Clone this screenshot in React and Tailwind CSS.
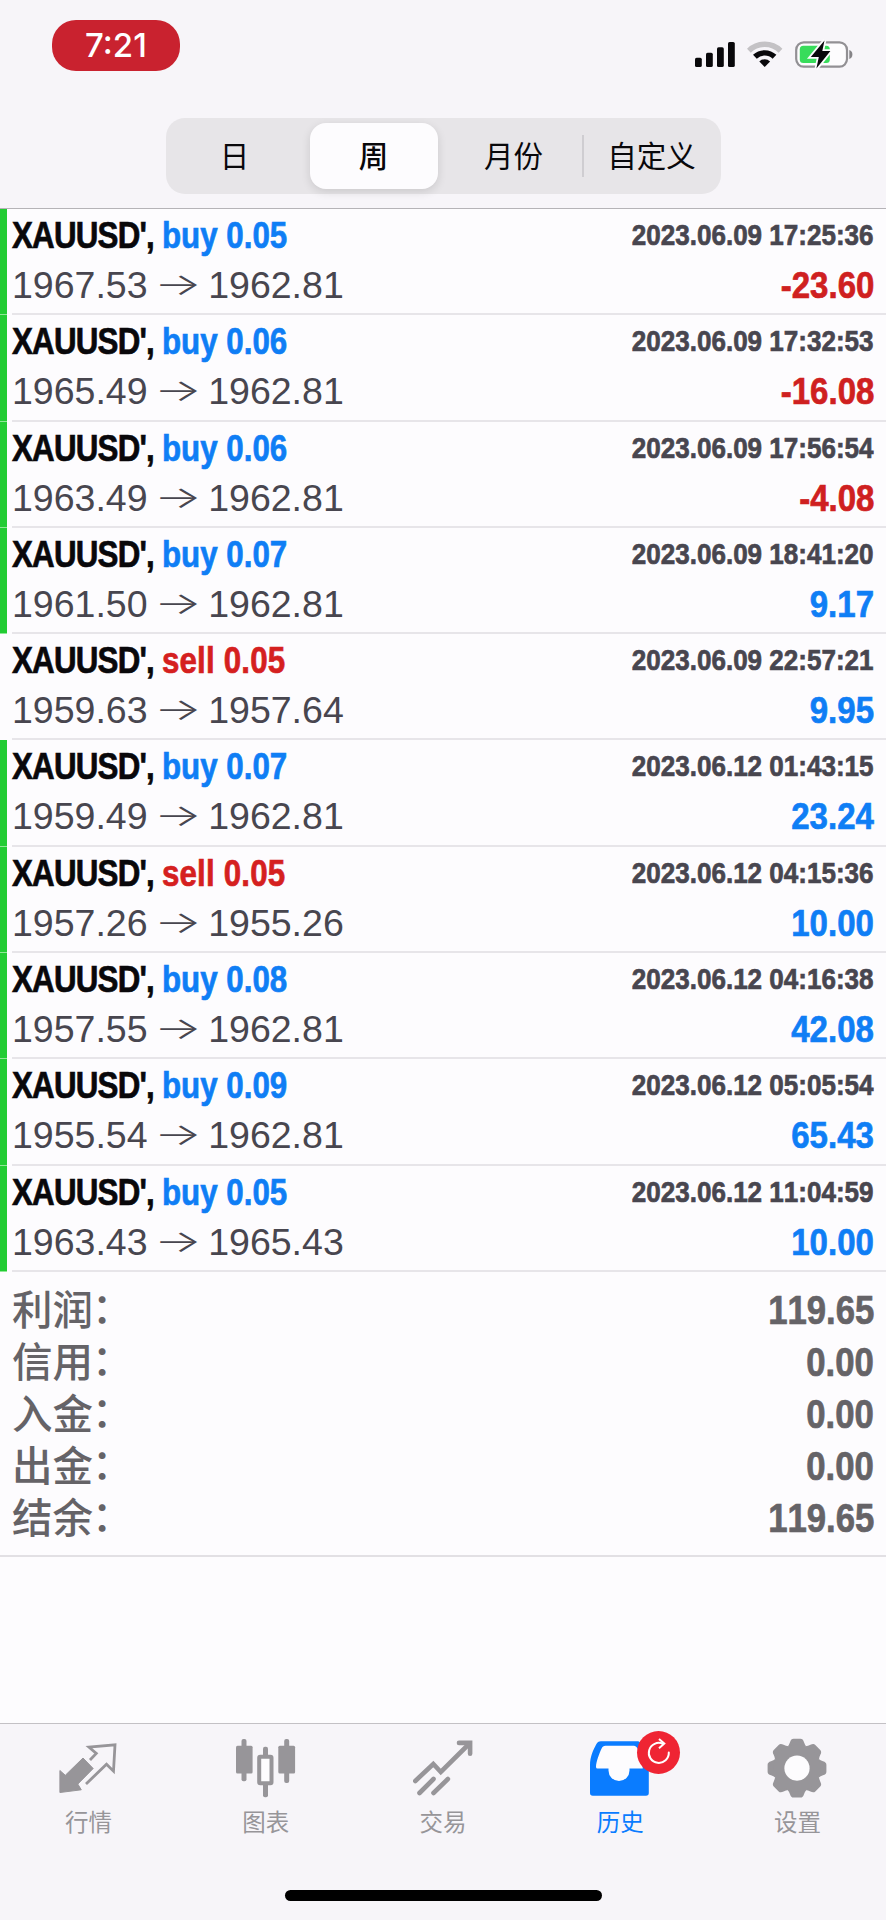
import React from 'react';
import { clsx } from 'clsx';

const periods = ['日', '周', '月份', '自定义'];

const deals = [
  { side: 'buy', lots: '0.05', open: '1967.53', close: '1962.81', time: '2023.06.09 17:25:36', profit: '-23.60', marked: true },
  { side: 'buy', lots: '0.06', open: '1965.49', close: '1962.81', time: '2023.06.09 17:32:53', profit: '-16.08', marked: true },
  { side: 'buy', lots: '0.06', open: '1963.49', close: '1962.81', time: '2023.06.09 17:56:54', profit: '-4.08', marked: true },
  { side: 'buy', lots: '0.07', open: '1961.50', close: '1962.81', time: '2023.06.09 18:41:20', profit: '9.17', marked: true },
  { side: 'sell', lots: '0.05', open: '1959.63', close: '1957.64', time: '2023.06.09 22:57:21', profit: '9.95', marked: false },
  { side: 'buy', lots: '0.07', open: '1959.49', close: '1962.81', time: '2023.06.12 01:43:15', profit: '23.24', marked: true },
  { side: 'sell', lots: '0.05', open: '1957.26', close: '1955.26', time: '2023.06.12 04:15:36', profit: '10.00', marked: true },
  { side: 'buy', lots: '0.08', open: '1957.55', close: '1962.81', time: '2023.06.12 04:16:38', profit: '42.08', marked: true },
  { side: 'buy', lots: '0.09', open: '1955.54', close: '1962.81', time: '2023.06.12 05:05:54', profit: '65.43', marked: true },
  { side: 'buy', lots: '0.05', open: '1963.43', close: '1965.43', time: '2023.06.12 11:04:59', profit: '10.00', marked: true },
];

const totals = [
  { label: '利润', value: '119.65' },
  { label: '信用', value: '0.00' },
  { label: '入金', value: '0.00' },
  { label: '出金', value: '0.00' },
  { label: '结余', value: '119.65' },
];

const StatusBar = () => (
  <div className="flex h-[118px] items-start justify-between pl-[52px] pr-[33px]">
    <div className="mt-5 flex h-[51px] w-32 items-center justify-center rounded-[24px] bg-[#c9222f] font-['Inter',sans-serif] text-[33px] font-medium leading-none text-white">
      7:21
    </div>
    <div className="mt-[39px] flex items-start">
      <svg width="40" height="31" viewBox="0 0 40 31" fill="#09080b">
        <rect x="0" y="18.7" width="6.8" height="9.3" rx="1.6" />
        <rect x="11" y="13.7" width="6.8" height="14.3" rx="1.6" />
        <rect x="22" y="8.3" width="6.8" height="19.7" rx="1.6" />
        <rect x="33" y="3" width="6.8" height="25" rx="1.6" />
      </svg>
      <svg className="ml-3" width="36" height="31" viewBox="0 -2 36 31" fill="none" strokeWidth="5.4">
        <path d="M1.9 9.7a22.7 22.7 0 0 1 31.6 0" stroke="#c4c2c5" />
        <path d="M7.9 15.8a14.1 14.1 0 0 1 19.6 0" stroke="#09080b" />
        <path d="M17.7 26l-5.4-5.6a8 8 0 0 1 10.8 0z" fill="#09080b" />
      </svg>
      <svg className="ml-[11px]" width="59" height="31" viewBox="0 0 59 31">
        <rect x="2.2" y="3.4" width="50.8" height="24.2" rx="7.5" fill="#fdfcfe" stroke="#929094" strokeWidth="2.2" />
        <rect x="5.8" y="6.7" width="30" height="17.3" rx="3.5" fill="#38dc5b" />
        <path d="M55.3 11c2.2.6 3.1 2.4 3.1 4.5s-.9 3.9-3.1 4.5z" fill="#858387" />
        <path d="M30.500 1.5L16.8 17.900h8L22.4 29.5 36.4 12.100h-8.1z" fill="#09080b" stroke="#fdfcfe" strokeWidth="3.6" paintOrder="stroke" />
      </svg>
    </div>
  </div>
);

const PeriodPicker = () => (
  <div className="mx-auto flex h-[76px] w-[555px] items-center rounded-[19px] bg-[#e7e5e8] font-['Noto_Sans_CJK_SC',sans-serif] text-[29.5px] text-[#09080b]">
    {periods.map((p) => (
      <button
        key={p}
        className={clsx(
          'flex shrink-0 items-center justify-center pb-0.5 leading-none',
          p === '周'
            ? 'mx-[6px] h-[66px] w-[128px] rounded-2xl bg-[#fdfcfe] font-medium shadow-[0_3px_10px_rgba(0,0,0,0.12)]'
            : 'h-[42px] w-[138px]',
          p === '月份' && 'pl-[2px]',
          p === '自定义' && 'border-l-2 border-[#cfcdd1]'
        )}
      >
        {p}
      </button>
    ))}
  </div>
);

// bold Helvetica squeezed horizontally, used for everything but the prices
const condensed = "font-['Liberation_Sans',sans-serif] font-bold [font-kerning:none] whitespace-pre [-webkit-text-stroke:0.7px_currentColor]";

const DealRow = ({ deal }) => (
  <li className="flex h-[106.3px]">
    <div className={clsx('mr-[5px] w-[7px] border-b', deal.marked ? 'border-[#8fe896] bg-[#22cc33]' : 'border-transparent')} />
    <div className="flex flex-1 justify-between border-b-2 border-[#e7e5e9] pr-3 pt-[2px]">
      <div>
        <div className={clsx(condensed, 'h-[49px] w-[340px] origin-left scale-x-[0.835] text-[37.5px] leading-[48px] tracking-[-0.95px] text-[#09080b]')}>
          XAUUSD', <span className={clsx(deal.side === 'buy' ? 'tracking-normal text-[#0f7ef5]' : 'tracking-[0.2px] text-[#d5201f]')}>{deal.side} {deal.lots}</span>
        </div>
        <div className="whitespace-pre font-['Liberation_Sans',sans-serif] text-[37.5px] leading-[51px] text-[#48464f] [font-kerning:none]">
          {deal.open} <span className="mx-[2px] inline-block scale-x-[1.34] scale-y-80 font-['Inter',sans-serif] font-light leading-none">→</span> {deal.close}
        </div>
      </div>
      <div className="flex flex-col items-end">
        <div className={clsx(condensed, 'h-[49px] origin-right scale-x-[0.868] text-[30px] leading-[47px] text-[#48464f]')}>{deal.time}</div>
        <div className={clsx(condensed, 'origin-right scale-x-[0.88] text-[37.5px] leading-[51px]', deal.profit.startsWith('-') ? 'text-[#cf2020]' : 'text-[#0f7ef5]')}>
          {deal.profit}
        </div>
      </div>
    </div>
  </li>
);

const Totals = () => (
  <div className="h-[285px] border-b-2 border-[#e2e0e4] px-3 pt-[12px] text-[#656367]">
    {totals.map((t) => (
      <div key={t.label} className="flex h-[52px] items-start justify-between">
        <span className="pt-[1px] font-['Liberation_Sans','Noto_Sans_CJK_SC',sans-serif] text-[40.5px] font-medium leading-[52px]">
          {t.label}<span className="relative -left-px -top-[2px]">：</span>
        </span>
        <span className={clsx(condensed, 'origin-right scale-x-[0.868] text-[40px] leading-[52px]')}>{t.value}</span>
      </div>
    ))}
  </div>
);

const QuotesIcon = () => (
  <svg width="60" height="60" viewBox="0 0 60 60">
    <path d="M31 22l6.300-6.600-7.300-6.200 26-2.300-1.500 26.300-7-6.900L27 46" fill="none" stroke="currentColor" strokeWidth="2.8" />
    <path d="M24 20l10.200 10.500-15.400 15.600 3.500 5.700L.9 54.500.9 32.500l5.400 4.800z" fill="currentColor" stroke="currentColor" strokeLinejoin="round" />
  </svg>
);

const ChartsIcon = () => (
  <svg width="60" height="60" viewBox="0 0 60 60" fill="currentColor">
    <rect x="5.500" y="1" width="5" height="42.300" rx="2" />
    <rect x="0" y="7.700" width="16.600" height="27.700" rx="1.500" />
    <rect x="27" y="8.700" width="5" height="50.600" rx="2" />
    <rect x="23.200" y="18.700" width="12.300" height="26.600" rx="1" fill="#fdfcfe" stroke="currentColor" strokeWidth="4" />
    <rect x="48.200" y="1" width="5" height="44" rx="2" />
    <rect x="42.300" y="7.700" width="16.800" height="27.700" rx="1.500" />
  </svg>
);

const TradeIcon = () => (
  <svg width="60" height="60" viewBox="0 0 60 60" fill="none" stroke="currentColor" strokeWidth="4.600" strokeLinecap="round">
    <path d="M2.300 43l18-17 7.500 8L56 6" />
    <path d="M46 4.900h11.100v10.900" />
    <path d="M6.500 55L20.500 41M20.500 55L34.900 41" />
  </svg>
);

const HistoryIcon = () => (
  <svg width="60" height="60" viewBox="0 0 60 60">
    <path d="M0 27C0 19 3.500 11.500 6 6.800 7.200 4.400 8.600 3.300 11 3.300H48C52 3.300 58.800 19 58.800 27V55Q58.800 57.700 56 57.700H2.800Q0 57.700 0 55z" fill="currentColor" />
    <path d="M6 29C6 24 9.500 15 11.600 10.600 12.500 8.500 13.500 7.700 15.500 7.700H44C49 7.700 52.800 23 52.800 30.500H39.500V32.500a10.500 10.500 0 0 1-21 0V30.500H7.500Q6 30.500 6 29z" fill="#fdfcfe" />
  </svg>
);

const SettingsIcon = () => (
  <svg width="60" height="60" viewBox="-30 -30.200 60 60" fill="currentColor">
    {[0, 45, 90, 135, 180, 225, 270, 315].map((a) => (
      <path key={a} transform={`rotate(${a})`} d="M-9.500-21.500Q-7.800-23.500-7-26Q-6-29.400-3.500-29.400H3.500Q6-29.400 7-26Q7.800-23.500 9.500-21.500z" />
    ))}
    <circle r="23.500" />
    <circle r="12.600" fill="#fdfcfe" />
  </svg>
);

const SyncBadge = () => (
  <span className="absolute left-[47px] top-[-7px] flex h-[43px] w-[43px] items-center justify-center rounded-full bg-[#ef2433]">
    <svg width="30" height="30" viewBox="-15 -15 30 30" fill="none" stroke="#fff" strokeWidth="2">
      <path d="M9.800-.5A10 10 0 1 1 4-9.200" strokeLinecap="round" />
      <path d="M0-14l5.300 4.600-5.300 4.700" />
    </svg>
  </span>
);

const tabs = [
  { label: '行情', icon: <QuotesIcon /> },
  { label: '图表', icon: <ChartsIcon /> },
  { label: '交易', icon: <TradeIcon /> },
  { label: '历史', icon: <HistoryIcon />, active: true },
  { label: '设置', icon: <SettingsIcon /> },
];

const TabBar = () => (
  <nav className="mt-auto flex h-[197px] flex-col border-t border-[#c3c1c5] bg-[#f7f5f9]">
    <div className="grid grid-cols-5 pt-3.5">
      {tabs.map((t) => (
        <button key={t.label} className={clsx('flex flex-col items-center', t.active ? 'text-[#0a7cff]' : 'text-[#979599]')}>
          <span className="relative">
            {t.icon}
            {t.active && <SyncBadge />}
          </span>
          <span className="mt-[9px] font-['Noto_Sans_CJK_SC',sans-serif] text-[23.5px] leading-7">{t.label}</span>
        </button>
      ))}
    </div>
    <div className="mx-auto mb-[19px] mt-auto h-[11.500px] w-[317px] rounded-full bg-black" />
  </nav>
);

export default function App() {
  return (
    <div className="flex h-[1920px] w-[886px] flex-col overflow-hidden bg-[#fdfcfe]">
      <header className="h-[209px] border-b border-[#b5b3b7] bg-[#f7f5f9]">
        <StatusBar />
        <PeriodPicker />
      </header>
      <ul>
        {deals.map((d) => <DealRow key={d.time} deal={d} />)}
      </ul>
      <Totals />
      <TabBar />
    </div>
  );
}
